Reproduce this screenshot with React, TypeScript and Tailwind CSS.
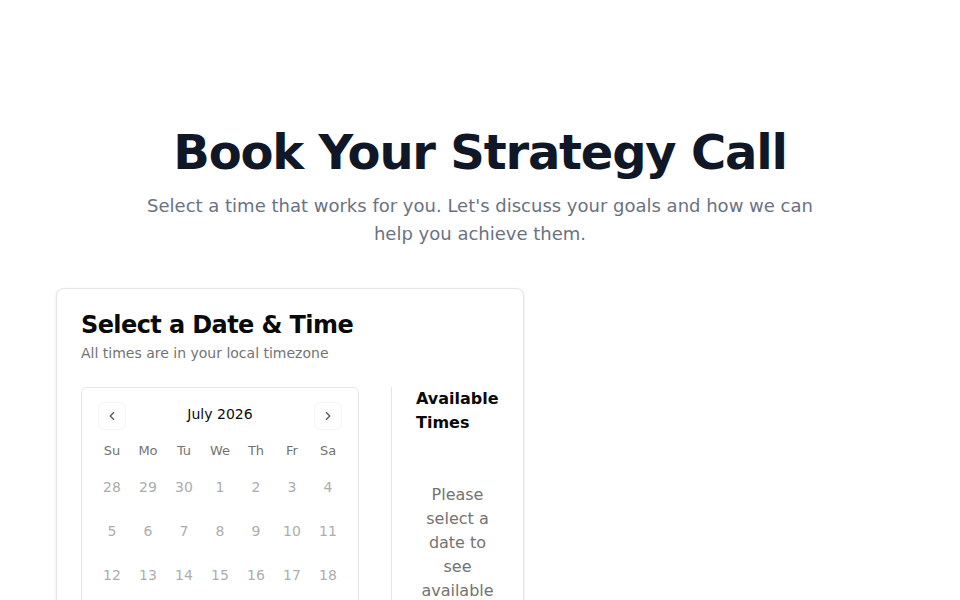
import React from 'react';
import { ChevronLeft, ChevronRight } from 'lucide-react';

const WEEKDAYS = ['Su', 'Mo', 'Tu', 'We', 'Th', 'Fr', 'Sa'];

const WEEKS = [
  [28, 29, 30, 1, 2, 3, 4],
  [5, 6, 7, 8, 9, 10, 11],
  [12, 13, 14, 15, 16, 17, 18],
  [19, 20, 21, 22, 23, 24, 25],
  [26, 27, 28, 29, 30, 31, 1],
];

function Calendar() {
  return (
    <div className="w-[278px] shrink-0 rounded-md border border-neutral-200 p-3">
      <div className="relative flex items-center justify-center pt-1">
        <button className="absolute left-1 top-[2px] flex h-7 w-7 items-center justify-center rounded-md border border-neutral-100">
          <ChevronLeft size={14} strokeWidth={2} className="text-neutral-600" />
        </button>
        <span className="text-sm font-medium leading-5 text-neutral-950">July 2026</span>
        <button className="absolute right-1 top-[2px] flex h-7 w-7 items-center justify-center rounded-md border border-neutral-100">
          <ChevronRight size={14} strokeWidth={2} className="text-neutral-600" />
        </button>
      </div>

      <div className="mt-[17px]">
        <div className="flex">
          {WEEKDAYS.map((d) => (
            <div key={d} className="flex h-5 w-9 items-center justify-center text-[13px] text-neutral-500">
              {d}
            </div>
          ))}
        </div>
        {WEEKS.map((week, i) => (
          <div key={i} className="mt-2 flex">
            {week.map((day, j) => (
              <div key={j} className="flex h-9 w-9 items-center justify-center text-sm text-[#adadad]">
                {day}
              </div>
            ))}
          </div>
        ))}
      </div>
    </div>
  );
}

export default function App() {
  return (
    <div className="min-h-screen bg-white pt-32 pb-16 font-['DejaVu_Sans',sans-serif]">
      {/* Hero */}
      <div className="mx-auto max-w-2xl text-center">
        <h1 className="text-5xl font-bold leading-none tracking-tight text-gray-900">Book Your Strategy Call</h1>
        <p className="mt-4 text-lg text-gray-500">
          Select a time that works for you. Let's discuss your goals and how we can help you achieve them.
        </p>
      </div>

      {/* Booking */}
      <div className="mx-auto mt-10 flex max-w-[848px]">
        <div className="w-[468px] rounded-lg border border-neutral-200 bg-white p-6 shadow-sm">
          <h2 className="text-2xl font-bold leading-none tracking-tight text-neutral-950">Select a Date &amp; Time</h2>
          <p className="mt-1.5 text-sm text-neutral-500">All times are in your local timezone</p>

          <div className="mt-6 flex gap-8">
            <Calendar />
            <div className="flex-1 border-l border-neutral-200 pl-6">
              <h3 className="text-base font-bold leading-6 text-neutral-950">Available Times</h3>
              <div className="mt-4 py-8 text-center text-base leading-6 text-neutral-500">
                Please select a date to see available times.
              </div>
            </div>
          </div>
        </div>
      </div>
    </div>
  );
}
